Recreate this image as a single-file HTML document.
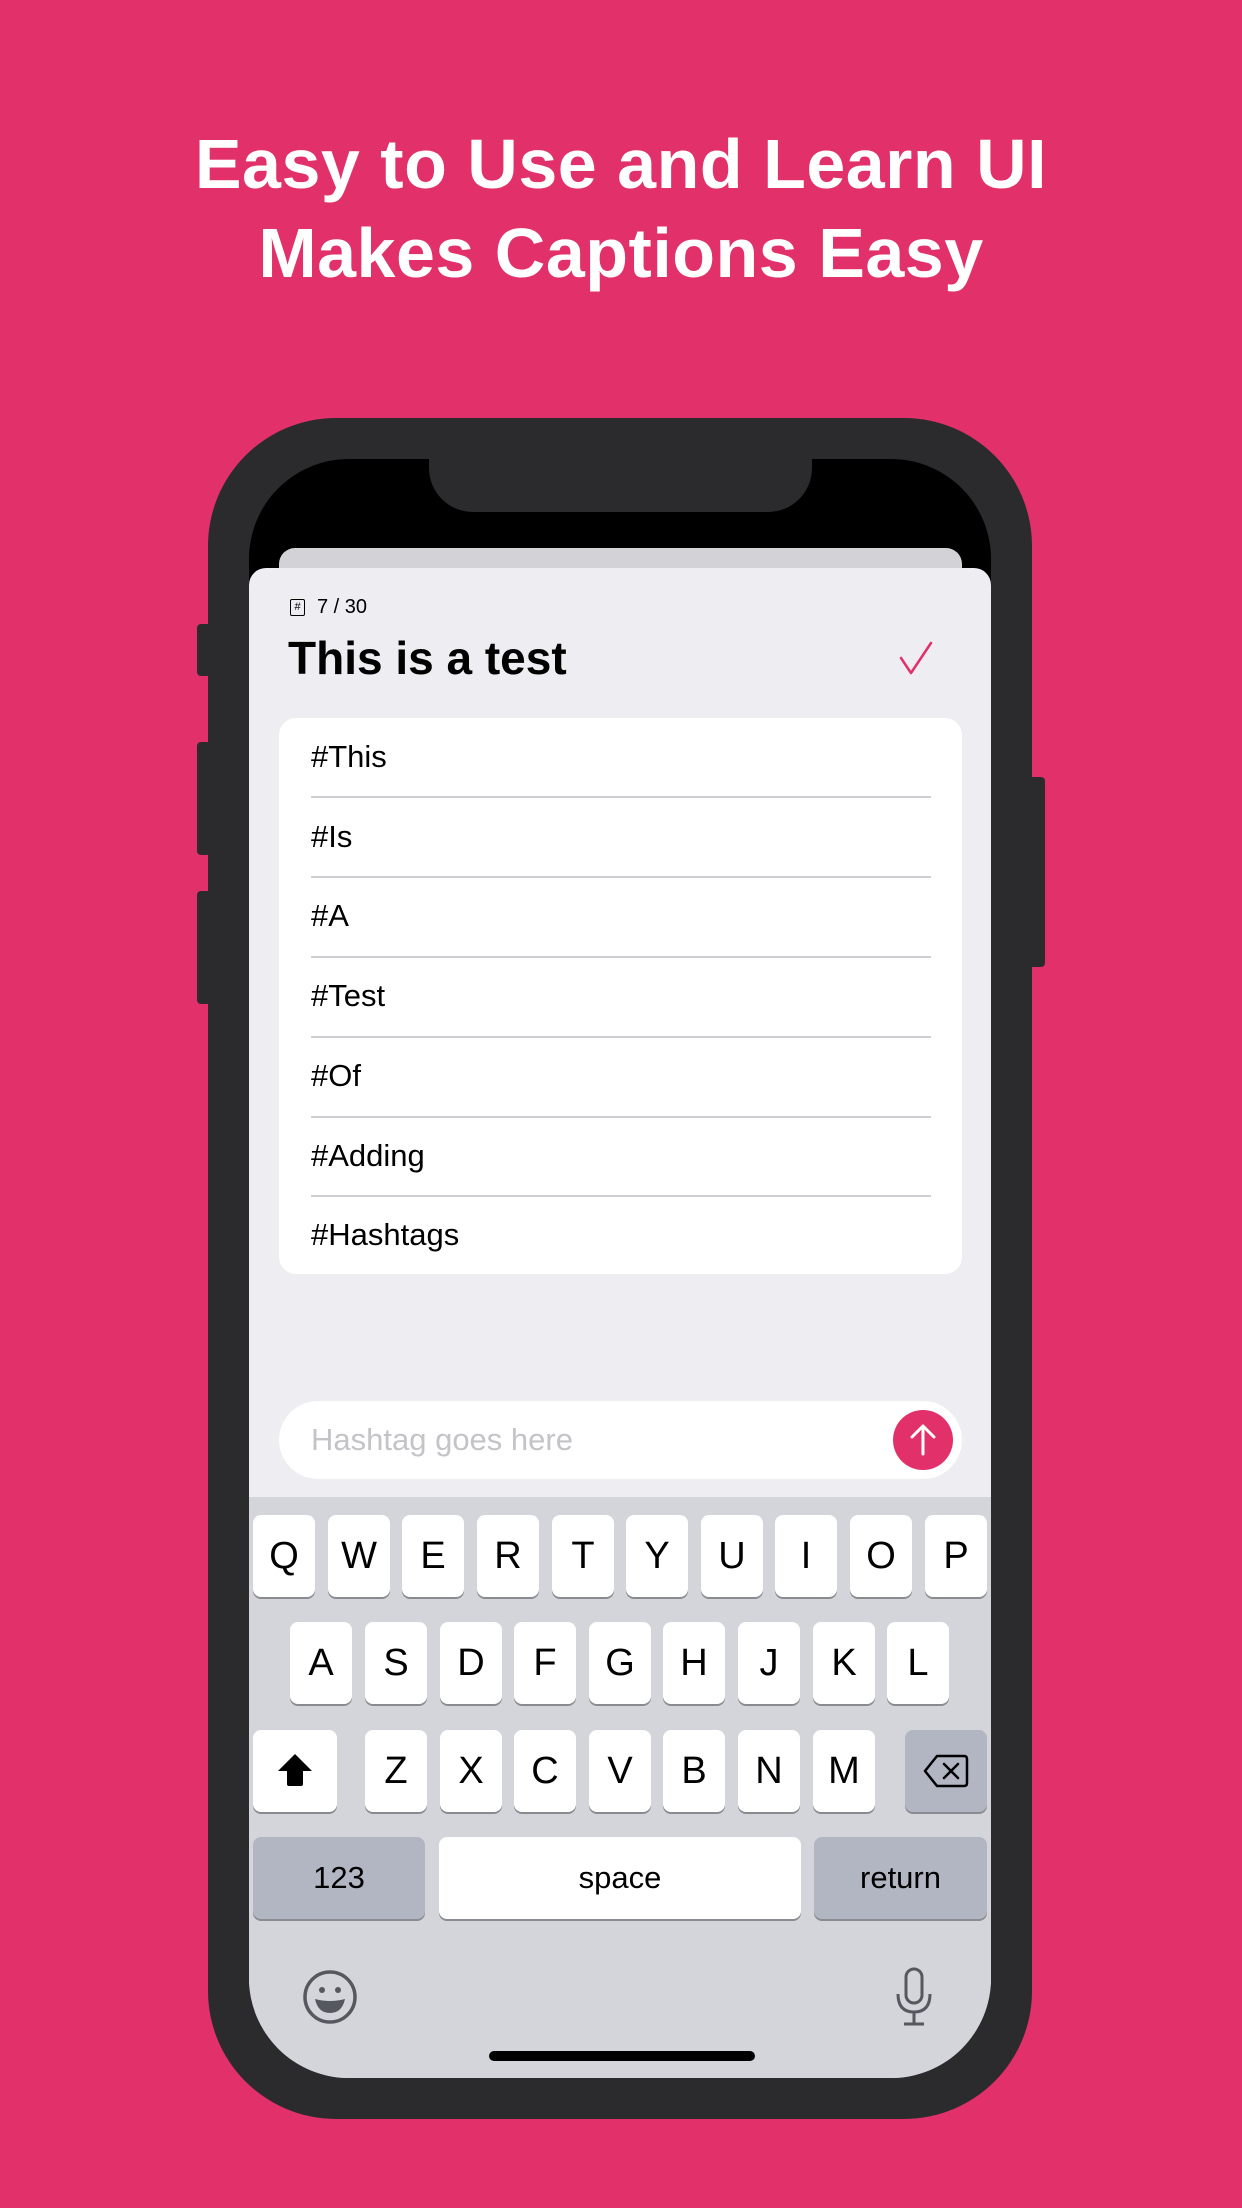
<!DOCTYPE html>
<html><head><meta charset="utf-8"><style>
*{margin:0;padding:0;box-sizing:border-box}
body{width:1242px;height:2208px;background:#e2306a;position:relative;overflow:hidden;font-family:"Liberation Sans",sans-serif}
.a{position:absolute}
h1{position:absolute;left:0;width:1242px;top:120px;text-align:center;color:#fff;font-size:70px;line-height:89px;font-weight:bold;letter-spacing:0.5px}
.key{position:absolute;background:#fff;border-radius:8px;box-shadow:0 2px 0 #8a8b90;text-align:center;color:#000;font-size:38px;line-height:82px;height:82px;width:62px}
.gk{background:#b2b6c2}
.row{position:absolute;left:311px;width:620px;height:80px;font-size:31px;line-height:80px;color:#000}
.sep{position:absolute;left:311px;width:620px;height:2px;background:#cfcfd3}
</style></head><body>
<h1>Easy to Use and Learn UI<br>Makes Captions Easy</h1>
<div class="a" style="left:197px;top:624px;width:14px;height:52px;background:#2b2b2d;border-radius:4px"></div>
<div class="a" style="left:197px;top:742px;width:14px;height:113px;background:#2b2b2d;border-radius:4px"></div>
<div class="a" style="left:197px;top:891px;width:14px;height:113px;background:#2b2b2d;border-radius:4px"></div>
<div class="a" style="left:1028px;top:777px;width:17px;height:190px;background:#2b2b2d;border-radius:4px"></div>
<div class="a" style="left:208px;top:418px;width:824px;height:1701px;background:#2b2b2d;border-radius:128px"></div>
<div class="a" style="left:249px;top:459px;width:742px;height:1619px;background:#000;border-radius:100px;overflow:hidden">
  <div class="a" style="left:180px;top:0;width:383px;height:53px;background:#2b2b2d;border-radius:0 0 44px 44px"></div>
  <div class="a" style="left:30px;top:89px;width:683px;height:60px;background:#d2d2d7;border-radius:16px"></div>
  <div class="a" style="left:0;top:109px;width:742px;height:1520px;background:#ededf2;border-radius:17px 17px 0 0"></div>
</div>
<div class="a" style="left:290px;top:599px;width:15px;height:17px;border:1.5px solid #000;border-radius:2px;font-size:11px;line-height:14px;text-align:center">#</div>
<div class="a" style="left:317px;top:594px;font-size:20px;line-height:26px;color:#000">7 / 30</div>
<div class="a" style="left:288px;top:627px;font-size:46px;line-height:62px;font-weight:bold;color:#000">This is a test</div>
<svg class="a" style="left:898px;top:640px" width="36" height="36" viewBox="0 0 36 36"><path d="M3 18 L13 33 L33 3" fill="none" stroke="#e2306a" stroke-width="2.5" stroke-linecap="round" stroke-linejoin="round"/></svg>
<div class="a" style="left:279px;top:718px;width:683px;height:556px;background:#fff;border-radius:17px"></div>
<div class="row" style="top:717px">#This</div>
<div class="sep" style="top:796px"></div>
<div class="row" style="top:797px">#Is</div>
<div class="sep" style="top:876px"></div>
<div class="row" style="top:876px">#A</div>
<div class="sep" style="top:956px"></div>
<div class="row" style="top:956px">#Test</div>
<div class="sep" style="top:1036px"></div>
<div class="row" style="top:1036px">#Of</div>
<div class="sep" style="top:1116px"></div>
<div class="row" style="top:1116px">#Adding</div>
<div class="sep" style="top:1195px"></div>
<div class="row" style="top:1195px">#Hashtags</div>
<div class="a" style="left:279px;top:1401px;width:683px;height:78px;background:#fff;border-radius:39px"></div>
<div class="a" style="left:311px;top:1401px;font-size:31px;line-height:78px;color:#c4c4c8">Hashtag goes here</div>
<svg class="a" style="left:892px;top:1409px" width="62" height="62" viewBox="0 0 62 62"><circle cx="31" cy="31" r="30" fill="#e2306a"/><path d="M31 45 V17 M20 28 L31 17 L42 28" fill="none" stroke="#fff" stroke-width="3" stroke-linecap="round" stroke-linejoin="round"/></svg>
<div class="a" style="left:249px;top:1497px;width:742px;height:581px;background:#d4d5da;border-radius:0 0 100px 100px"></div>
<div class="key" style="left:253px;top:1515px">Q</div>
<div class="key" style="left:328px;top:1515px">W</div>
<div class="key" style="left:402px;top:1515px">E</div>
<div class="key" style="left:477px;top:1515px">R</div>
<div class="key" style="left:552px;top:1515px">T</div>
<div class="key" style="left:626px;top:1515px">Y</div>
<div class="key" style="left:701px;top:1515px">U</div>
<div class="key" style="left:775px;top:1515px">I</div>
<div class="key" style="left:850px;top:1515px">O</div>
<div class="key" style="left:925px;top:1515px">P</div>
<div class="key" style="left:290px;top:1622px">A</div>
<div class="key" style="left:365px;top:1622px">S</div>
<div class="key" style="left:440px;top:1622px">D</div>
<div class="key" style="left:514px;top:1622px">F</div>
<div class="key" style="left:589px;top:1622px">G</div>
<div class="key" style="left:663px;top:1622px">H</div>
<div class="key" style="left:738px;top:1622px">J</div>
<div class="key" style="left:813px;top:1622px">K</div>
<div class="key" style="left:887px;top:1622px">L</div>
<div class="key" style="left:253px;top:1730px;width:84px"><svg width="40" height="40" viewBox="0 0 40 40" style="margin-top:20px"><path d="M20 4 L37 21 H28 V34 Q28 36 26 36 H14 Q12 36 12 34 V21 H3 Z" fill="#000"/></svg></div>
<div class="key" style="left:365px;top:1730px">Z</div>
<div class="key" style="left:440px;top:1730px">X</div>
<div class="key" style="left:514px;top:1730px">C</div>
<div class="key" style="left:589px;top:1730px">V</div>
<div class="key" style="left:663px;top:1730px">B</div>
<div class="key" style="left:738px;top:1730px">N</div>
<div class="key" style="left:813px;top:1730px">M</div>
<div class="key gk" style="left:905px;top:1730px;width:82px"><svg width="46" height="34" viewBox="0 0 46 34" style="margin-top:24px"><path d="M14 2 H41 Q44 2 44 5 V29 Q44 32 41 32 H14 L2 17 Z" fill="none" stroke="#000" stroke-width="2.5" stroke-linejoin="round"/><path d="M21 10 L35 24 M35 10 L21 24" stroke="#000" stroke-width="2.5" stroke-linecap="round"/></svg></div>
<div class="key gk" style="left:253px;top:1837px;width:172px;font-size:31px">123</div>
<div class="key" style="left:439px;top:1837px;width:362px;font-size:31px">space</div>
<div class="key gk" style="left:814px;top:1837px;width:173px;font-size:31px">return</div>
<svg class="a" style="left:302px;top:1969px" width="56" height="56" viewBox="0 0 56 56"><circle cx="28" cy="28" r="25" fill="none" stroke="#55585f" stroke-width="3.5"/><circle cx="20" cy="21" r="3" fill="#55585f"/><circle cx="36" cy="21" r="3" fill="#55585f"/><path d="M13 30 Q28 34 43 30 Q40 44 28 44 Q16 44 13 30 Z" fill="#55585f"/></svg>
<svg class="a" style="left:894px;top:1967px" width="40" height="60" viewBox="0 0 40 60"><rect x="12" y="2" width="16" height="34" rx="8" fill="none" stroke="#55585f" stroke-width="3"/><path d="M4 27 Q4 45 20 45 Q36 45 36 27 M20 45 V56 M10 57 H30" fill="none" stroke="#55585f" stroke-width="3"/></svg>
<div class="a" style="left:489px;top:2051px;width:266px;height:10px;background:#000;border-radius:5px"></div>
</body></html>
